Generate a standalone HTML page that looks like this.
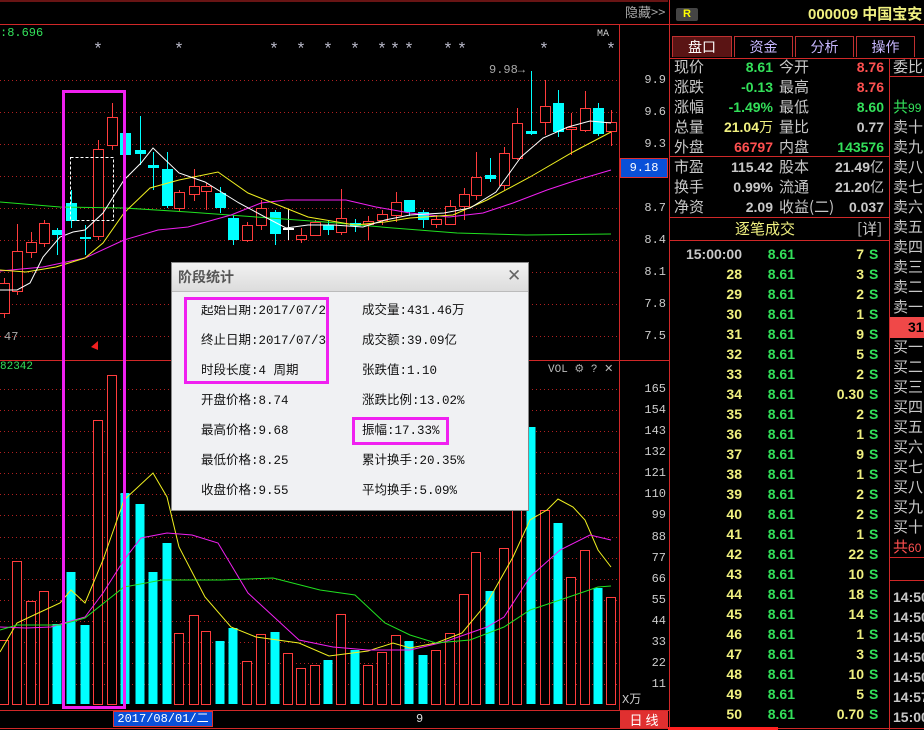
<!DOCTYPE html>
<html><head><meta charset="utf-8">
<style>
*{margin:0;padding:0;box-sizing:border-box}
body{width:924px;height:730px;background:#000;overflow:hidden;position:relative;font-family:"Liberation Sans","Noto Sans CJK SC",sans-serif}
.a{position:absolute;white-space:nowrap;line-height:1}
.m{font-family:"Liberation Mono","Noto Sans CJK SC",monospace}
.ax{position:absolute;right:258px;font-family:"Liberation Mono",monospace;font-size:12px;color:#ccc;line-height:1}
.lb{position:absolute;white-space:nowrap;font-family:"Noto Sans CJK SC",sans-serif;font-size:15px;color:#c8c8c8;line-height:1}
.v{position:absolute;white-space:nowrap;font-weight:bold;font-size:14px;line-height:1;text-align:right;font-family:"Liberation Sans","Noto Sans CJK SC",sans-serif}
.g{color:#33e05a}.r{color:#ff5050}.y{color:#f0f080}.w{color:#c8c8c8}
.dl{position:absolute;white-space:nowrap;font-family:"Liberation Mono","Noto Sans CJK SC",monospace;font-size:12.5px;color:#111;line-height:1}
</style></head><body>
<svg id="s" width="924" height="730" style="position:absolute;left:0;top:0"></svg>

<div class="a" style="left:625px;top:5px;font-size:13px;color:#aaa;font-family:'Noto Sans CJK SC',sans-serif">隐藏&gt;&gt;</div>
<div class="a m" style="left:0;top:27px;font-size:12px;color:#33e05a">:8.696</div>
<div class="a m" style="left:597px;top:30px;font-size:10px;color:#ccc">MA</div>
<div class="a m" style="left:489px;top:64px;font-size:12px;color:#aaa">9.98→</div>
<div class="a m" style="left:4px;top:331px;font-size:12px;color:#aaa">47</div>

<div class="ax" style="top:74px">9.9</div>
<div class="ax" style="top:106px">9.6</div>
<div class="ax" style="top:138px">9.3</div>
<div class="ax" style="top:202px">8.7</div>
<div class="ax" style="top:234px">8.4</div>
<div class="ax" style="top:266px">8.1</div>
<div class="ax" style="top:298px">7.8</div>
<div class="ax" style="top:330px">7.5</div>
<div class="a m" style="left:620px;top:158px;width:48px;height:20px;background:#0a50d8;border:1px solid #e03030;color:#fff;font-size:12px;text-align:center;line-height:18px">9.18</div>

<div class="a m" style="left:0;top:362px;font-size:11px;color:#33e05a">82342</div>
<div class="a m" style="left:548px;top:363px;font-size:11px;color:#bbb">VOL <span style="font-family:'DejaVu Sans';color:#aaa">⚙</span> ? ✕</div>
<div id="vax"></div>
<div class="a" style="left:622px;top:694px;font-size:12px;color:#ccc;font-family:'Liberation Mono','Noto Sans CJK SC',monospace">X万</div>

<div class="a m" style="left:113px;top:711px;width:100px;height:16px;background:#0a50d8;border:1px solid #e03030;color:#fff;font-size:12px;text-align:center;line-height:14px">2017/08/01/二</div>
<div class="a m" style="left:416px;top:713px;font-size:12px;color:#ddd">9</div>
<div class="a" style="left:620px;top:711px;width:48px;height:17px;background:#e03030;color:#fff;font-size:13px;text-align:center;line-height:17px;font-family:'Noto Sans CJK SC',sans-serif">日&nbsp;线</div>

<div class="a" style="left:171px;top:262px;width:358px;height:249px;background:#f0f1f3;border:1px solid #888">
  <div style="position:absolute;left:0;top:0;width:356px;height:29px;background:linear-gradient(#f2f2f2,#dcdcdc);border-bottom:1px solid #bbb"></div>
  <div class="a" style="left:6px;top:7px;font-size:14px;font-weight:bold;color:#555;font-family:'Noto Sans CJK SC',sans-serif">阶段统计</div>
  <div class="a" style="left:335px;top:5px;font-size:17px;color:#666;font-family:'DejaVu Sans'">✕</div>
</div>
<div style="position:absolute;left:201px;top:305px;width:125px;height:200px;overflow:hidden">
  <div class="dl" style="left:0;top:0">起始日期:2017/07/26</div>
  <div class="dl" style="left:0;top:30px">终止日期:2017/07/31</div>
  <div class="dl" style="left:0;top:60px">时段长度:4 周期</div>
  <div class="dl" style="left:0;top:90px">开盘价格:8.74</div>
  <div class="dl" style="left:0;top:120px">最高价格:9.68</div>
  <div class="dl" style="left:0;top:150px">最低价格:8.25</div>
  <div class="dl" style="left:0;top:180px">收盘价格:9.55</div>
</div>
<div class="dl" style="left:362px;top:305px">成交量:431.46万</div>
<div class="dl" style="left:362px;top:335px">成交额:39.09亿</div>
<div class="dl" style="left:362px;top:365px">张跌值:1.10</div>
<div class="dl" style="left:362px;top:395px">涨跌比例:13.02%</div>
<div class="dl" style="left:362px;top:425px">振幅:17.33%</div>
<div class="dl" style="left:362px;top:455px">累计换手:20.35%</div>
<div class="dl" style="left:362px;top:485px">平均换手:5.09%</div>
<div class="a" style="left:184px;top:297px;width:145px;height:87px;border:3px solid #f020f0"></div>
<div class="a" style="left:352px;top:417px;width:97px;height:28px;border:3px solid #f020f0"></div>

<div class="a" style="left:676px;top:8px;width:22px;height:13px;background:#444;border-radius:2px;color:#ff0;font-size:11px;font-weight:bold;text-align:center;line-height:13px">R</div>
<div class="a" style="left:808px;top:7px;font-size:15px;font-weight:bold;color:#f0f080;font-family:'Liberation Sans','Noto Sans CJK SC',sans-serif">000009 中国宝安</div>
<div class="a" style="left:672px;top:36px;width:60px;height:21px;background:#5a1414;border:1px solid #c03030;border-bottom:none;color:#fff;font-size:14px;text-align:center;line-height:20px;font-family:'Noto Sans CJK SC'">盘口</div>
<div class="a" style="left:734px;top:36px;width:59px;height:21px;border:1px solid #c03030;border-bottom:none;color:#c8b8ff;font-size:14px;text-align:center;line-height:20px;font-family:'Noto Sans CJK SC'">资金</div>
<div class="a" style="left:795px;top:36px;width:59px;height:21px;border:1px solid #c03030;border-bottom:none;color:#c8b8ff;font-size:14px;text-align:center;line-height:20px;font-family:'Noto Sans CJK SC'">分析</div>
<div class="a" style="left:856px;top:36px;width:59px;height:21px;border:1px solid #c03030;border-bottom:none;color:#c8b8ff;font-size:14px;text-align:center;line-height:20px;font-family:'Noto Sans CJK SC'">操作</div>
<div id="rp"></div>
<div class="a" style="left:890px;top:317px;width:34px;height:21px;background:#f04848"></div>
<div class="a" style="left:908px;top:320px;font-size:14px;font-weight:bold;color:#000">31</div>

<script>
const S=document.getElementById('s');let h='';
function L(x1,y1,x2,y2,c,w,d){h+=`<line x1="${x1}" y1="${y1}" x2="${x2}" y2="${y2}" stroke="${c}" stroke-width="${w||1}" ${d?`stroke-dasharray="${d}"`:''}/>`}
function R(x,y,w,hh,f,s,sw){h+=`<rect x="${x}" y="${y}" width="${w}" height="${hh}" fill="${f}" ${s?`stroke="${s}" stroke-width="${sw||1}"`:''}/>`}
function P(pts,c){h+=`<polyline points="${pts.map(p=>p.join(',')).join(' ')}" fill="none" stroke="${c}" stroke-width="1"/>`}
L(0,24.5,924,24.5,'#d02828');L(0,1,668,1,'#d02828');
L(619.5,24,619.5,710,'#d02828');L(669.5,0,669.5,730,'#d02828');
L(0,360.5,669,360.5,'#d02828');L(0,710.5,669,710.5,'#d02828');L(0,728.5,924,728.5,'#d02828');
L(668,728.5,778,728.5,'#ff2020',3);
[80,112,144,176,208,240,272,304,336].forEach(y=>L(0,y+.5,619,y+.5,'#b02020',1,'1,3'));
[389,410,431,452,473,494,515,537,558,579,600,621,642,663,684].forEach(y=>L(0,y+.5,619,y+.5,'#b02020',1,'1,3'));
[98,179,274,301,328,355,382,395,409,448,462,544,611].forEach(x=>h+=`<text x="${x}" y="54" fill="#b8b8c8" font-size="17" font-family="Liberation Mono" text-anchor="middle">*</text>`);
const C=[[4,'r',283,313,278,318],[17,'r',251,291,224,295],[31,'r',242,252,232,258],[44,'r',223,243,220,247],[57,'c',230,235,228,255],[71,'c',203,221,190,228],[85,'c',237,239,225,255],[98,'r',149,236,140,240],[112,'r',117,145,103,150],[125,'c',133,155,133,157],[140,'c',150,154,116,165],[153,'c',165,168,152,190],[167,'c',169,206,152,208],[179,'r',192,208,190,212],[194,'r',186,194,169,201],[206,'r',186,191,183,210],[220,'c',193,208,187,213],[233,'c',218,240,215,245],[247,'r',225,240,222,242],[261,'r',208,225,200,230],[275,'c',212,234,210,245],[288,'w',228,229,209,240],[301,'r',235,239,228,243],[315,'r',222,235,220,236],[328,'c',225,230,220,235],[341,'r',218,232,189,235],[355,'c',223,226,219,232],[368,'r',221,224,216,240],[382,'r',214,220,210,225],[396,'r',202,215,192,222],[409,'c',200,212,200,216],[423,'c',212,220,210,228],[436,'r',219,224,215,228],[450,'r',206,224,200,225],[464,'r',194,206,188,220],[476,'r',177,195,152,200],[490,'c',175,179,158,182],[504,'r',153,185,147,190],[517,'r',123,158,108,160],[531,'c',131,134,71,135],[545,'r',106,122,80,135],[558,'c',103,132,90,137],[571,'r',127,129,113,155],[585,'r',108,130,91,132],[598,'c',108,134,103,136],[611,'r',122,131,110,146]];
C.forEach(([x,c,t,b,hi,lo])=>{const col=c=='r'?'#ff3c3c':c=='c'?'#00ffff':'#fff';
 L(x+.5,hi,x+.5,t,col);L(x+.5,b,x+.5,lo,col);
 if(c=='r')R(x-4.5,t+.5,10,Math.max(b-t,1),'#000',col);else R(x-5,t,11,Math.max(b-t,2),col);});
P([[0,202],[60,207],[124,208],[188,212],[256,217],[325,222],[393,228],[457,233],[526,235],[611,234]],'#20e020');
P([[0,271],[43,267],[85,258],[124,240],[158,230],[188,227],[231,215],[261,203],[286,200],[346,200],[376,207],[410,213],[449,217],[483,213],[513,203],[547,190],[577,180],[611,170]],'#f020f0');
P([[0,270],[26,272],[56,267],[85,258],[103,243],[124,213],[150,188],[179,180],[218,172],[248,193],[273,203],[308,217],[355,225],[385,222],[410,218],[453,215],[487,200],[530,177],[573,152],[611,132]],'#f0f020');
P([[0,290],[17,290],[30,283],[43,257],[60,237],[73,232],[85,230],[103,213],[124,180],[141,163],[153,148],[179,173],[205,182],[239,203],[265,217],[286,228],[308,225],[333,225],[363,227],[385,220],[410,215],[444,213],[470,208],[496,192],[521,157],[543,138],[568,127],[590,121],[611,123]],'#ffffff');
h+=`<rect x="70.5" y="157.5" width="43" height="63" fill="none" stroke="#fff" stroke-dasharray="3,2"/>`;
h+=`<path d="M91 347 L98 341 L98 350Z" fill="#f02020"/>`;
const V=[640,561,601,591,624,572,625,420,375,493,504,572,543,633,615,631,641,628,661,634,632,653,668,665,660,614,650,665,652,635,641,655,650,633,594,552,591,548,510,427,510,523,577,550,588,597];
V.forEach((t,i)=>{const x=C[i][0],c=C[i][1];if(c=='c')R(x-4.5,t,9,704-t,'#00ffff');else R(x-4.5,t+.5,9,704-t,'#000','#ff3c3c');});
P([[0,652],[17,623],[34,615],[60,603],[71,590],[85,603],[103,560],[124,500],[153,473],[167,497],[179,547],[205,597],[231,627],[256,637],[299,643],[329,656],[368,651],[393,643],[410,648],[436,643],[462,633],[487,603],[513,557],[530,520],[547,510],[558,499],[573,507],[585,520],[598,550],[611,567]],'#f0f020');
P([[0,627],[26,628],[51,627],[64,623],[85,617],[103,593],[124,560],[141,538],[167,533],[192,535],[218,543],[248,593],[299,640],[333,647],[368,650],[410,650],[444,642],[487,627],[504,617],[530,577],[560,550],[590,535],[611,540]],'#f020f0');
P([[0,630],[17,625],[60,625],[85,618],[124,587],[162,580],[222,580],[273,578],[320,590],[355,595],[385,623],[410,635],[436,643],[470,640],[504,627],[530,610],[560,600],[598,587],[611,586]],'#20e020');
h+=`<rect x="63.5" y="91.5" width="61" height="616" fill="none" stroke="#f020f0" stroke-width="3"/>`;
L(670,58.5,924,58.5,'#d02828');L(670,156.5,890,156.5,'#d02828');L(670,217.5,890,217.5,'#d02828');L(670,240.5,890,240.5,'#d02828');
L(889.5,58,889.5,730,'#d02828');L(890,76.5,924,76.5,'#d02828');L(890,557.5,924,557.5,'#d02828');L(890,580.5,924,580.5,'#d02828');
S.innerHTML=h;
let va='';[[165,389],[154,410],[143,431],[132,452],[121,473],[110,494],[99,515],[88,537],[77,558],[66,579],[55,600],[44,621],[33,642],[22,663],[11,684]].forEach(([t,y])=>va+=`<div class="ax" style="top:${y-6}px">${t}</div>`);
document.getElementById('vax').innerHTML=va;
let r='';
function lb(x,y,t,c){r+=`<div class="lb" style="left:${x}px;top:${y-8}px;${c?'color:'+c:''}">${t}</div>`}
function vv(rx,y,t,c){r+=`<div class="v ${c}" style="right:${924-rx}px;top:${y-7}px">${t}</div>`}
const rows=[['现价','8.61','g','今开','8.76','r'],['涨跌','-0.13','g','最高','8.76','r'],['涨幅','-1.49%','g','最低','8.60','g'],['总量','21.04<span style="font-weight:normal;font-family:Noto Sans CJK SC">万</span>','y','量比','0.77','w'],['外盘','66797','r','内盘','143576','g'],['市盈','115.42','w','股本','21.49<span style="font-weight:normal;font-family:Noto Sans CJK SC">亿</span>','w'],['换手','0.99%','w','流通','21.20<span style="font-weight:normal;font-family:Noto Sans CJK SC">亿</span>','w'],['净资','2.09','w','收益(二)','0.037','w']];
const ys=[67,87,107,127,147,167,187,207];
rows.forEach((q,i)=>{lb(674,ys[i],q[0]);vv(773,ys[i],q[1],q[2]);lb(779,ys[i],q[3]);vv(884,ys[i],q[4],q[5]);});
lb(735,229,'逐笔成交','#f0f080');lb(857,229,'[详]');
const T=['15:00:00',28,29,30,31,32,33,34,35,36,37,38,39,40,41,42,43,44,45,46,47,48,49,50];
const Q=[7,3,2,1,9,5,2,'0.30',2,1,9,1,2,2,1,22,10,18,14,1,3,10,5,'0.70'];
T.forEach((t,i)=>{const y=254+i*20;vv(742,y,t,i?'y':'w');vv(795,y,'8.61','g');vv(864,y,Q[i],'y');r+=`<div class="v g" style="left:869px;top:${y-7}px">S</div>`;});
lb(893,67,'委比');lb(893,107,'共<span style="font-size:12px;font-family:Liberation Sans">99</span>','#33e05a');
['十','九','八','七','六','五','四','三','二','一'].forEach((c,i)=>lb(893,127+i*20,'卖'+c));
['一','二','三','四','五','六','七','八','九','十'].forEach((c,i)=>lb(893,347+i*20,'买'+c));
lb(893,547,'共<span style="font-size:12px;font-family:Liberation Sans">60</span>','#ff5050');
['14:50','14:50','14:50','14:50','14:50','14:57','15:00'].forEach((t,i)=>r+=`<div class="v w" style="left:893px;top:${590+i*20}px">${t}</div>`);
document.getElementById('rp').innerHTML=r;
</script>
</body></html>
